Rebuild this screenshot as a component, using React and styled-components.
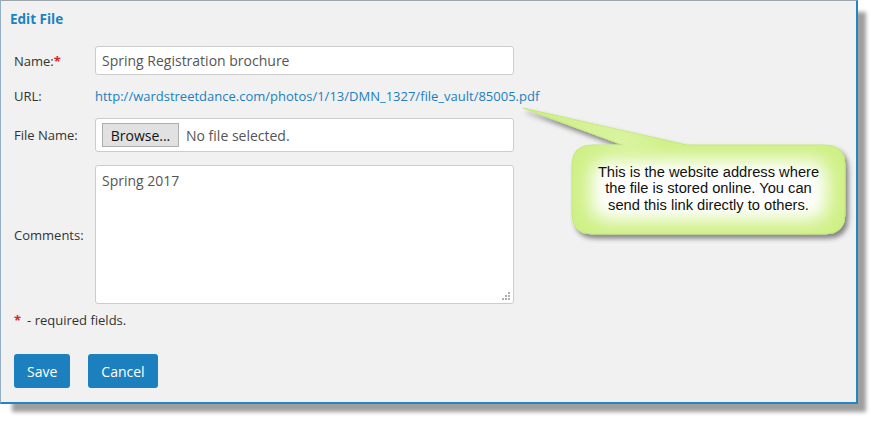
import React from 'react'
import styled, { createGlobalStyle } from 'styled-components'

const Global = createGlobalStyle`
  body {
    margin: 0;
    background: #ffffff;
    font-family: 'Open Sans', 'Liberation Sans', sans-serif;
  }
`

const Page = styled.div`
  width: 883px;
  height: 430px;
  position: relative;
  overflow: hidden;
`

const Panel = styled.div`
  box-sizing: border-box;
  width: 858px;
  height: 404px;
  background: #f1f1f1;
  border-top: 1px solid #9ea6ad;
  border-left: 1px solid #93afc6;
  border-right: 2px solid #2186c6;
  border-bottom: 2px solid #2186c6;
  box-shadow: 10px 10px 4px -2px rgba(0, 0, 0, 0.38);
  padding: 0 0 0 13px;
`

const Title = styled.h2`
  margin: 0 0 0 -4px;
  padding-top: 9px;
  height: 35px;
  box-sizing: border-box;
  font-size: 13.5px;
  line-height: 18px;
  font-weight: 700;
  color: #1b82c2;
`

const Row = styled.div`
  display: flex;
  align-items: center;
  height: ${p => p.h}px;
  margin-top: ${p => p.mt}px;
`

const Label = styled.div`
  width: 81px;
  flex: none;
  font-size: 13px;
  color: #333333;
`

const Star = styled.span`
  color: #e02020;
  font-weight: 700;
`

const TextBox = styled.div`
  box-sizing: border-box;
  width: 419px;
  height: 100%;
  background: #ffffff;
  border: 1px solid #cccccc;
  border-radius: 3px;
  display: flex;
  align-items: center;
  padding-left: 6px;
  font-size: 14px;
  color: #555555;
`

const Link = styled.a`
  font-size: 13px;
  color: #1b7fbf;
  text-decoration: none;
`

const FileBox = styled(TextBox)`
  gap: 7px;
`

const BrowseButton = styled.button`
  height: 24px;
  width: 77px;
  padding: 0;
  background: #e1e1e1;
  border: 1px solid #adadad;
  border-radius: 0;
  font-family: 'Open Sans', sans-serif;
  font-size: 14px;
  color: #111111;
`

const Area = styled(TextBox)`
  position: relative;
  align-items: flex-start;
  padding-top: 5px;
`

const Grip = styled.svg`
  position: absolute;
  right: 2px;
  bottom: 2px;
`

const Note = styled.div`
  margin-top: 7px;
  height: 18px;
  font-size: 13px;
  color: #333333;
  display: flex;
  align-items: center;
  gap: 6px;
`

const Buttons = styled.div`
  display: flex;
  gap: 18px;
  margin-top: 25px;
`

const Button = styled.button`
  height: 34px;
  padding: 0 ${p => p.px}px;
  background: #1b80bd;
  color: #ffffff;
  border: none;
  border-radius: 3px;
  font-family: 'Open Sans', sans-serif;
  font-size: 14px;
`

const Callout = styled.div`
  position: absolute;
  left: 515px;
  top: 100px;
  width: 350px;
  height: 150px;
`

const CalloutText = styled.div`
  position: absolute;
  left: 57px;
  top: 44px;
  width: 273px;
  height: 89px;
  display: flex;
  align-items: center;
  justify-content: center;
  text-align: center;
  font-family: 'Liberation Sans', Arial, sans-serif;
  font-size: 14.7px;
  line-height: 16.5px;
  color: #111111;
`

const bubble =
  'M 77 45 L 108 45 L 8 8 L 172 45 L 310 45 Q 330 45 330 65 L 330 114 Q 330 134 310 134 L 77 134 Q 57 134 57 114 L 57 65 Q 57 45 77 45 Z'

const App = () => {
  return (
    <Page>
      <Global />
      <Panel>
        <Title>Edit File</Title>
        <Row h={29} mt={10}>
          <Label>
            Name:<Star>*</Star>
          </Label>
          <TextBox>Spring Registration brochure</TextBox>
        </Row>
        <Row h={20} mt={11}>
          <Label>URL:</Label>
          <Link href="#">http://wardstreetdance.com/photos/1/13/DMN_1327/file_vault/85005.pdf</Link>
        </Row>
        <Row h={34} mt={12}>
          <Label>File Name:</Label>
          <FileBox>
            <BrowseButton>Browse...</BrowseButton>
            <span>No file selected.</span>
          </FileBox>
        </Row>
        <Row h={139} mt={13}>
          <Label>Comments:</Label>
          <Area>
            Spring 2017
            <Grip width="9" height="9" viewBox="0 0 9 9">
              <g fill="#b0b0b0">
                <rect x="6" y="0" width="2" height="2" />
                <rect x="3" y="3" width="2" height="2" />
                <rect x="6" y="3" width="2" height="2" />
                <rect x="0" y="6" width="2" height="2" />
                <rect x="3" y="6" width="2" height="2" />
                <rect x="6" y="6" width="2" height="2" />
              </g>
            </Grip>
          </Area>
        </Row>
        <Note>
          <Star>*</Star>
          <span>- required fields.</span>
        </Note>
        <Buttons>
          <Button px={13}>Save</Button>
          <Button px={13}>Cancel</Button>
        </Buttons>
      </Panel>
      <Callout>
        <svg width="350" height="150" viewBox="0 0 350 150">
          <defs>
            <filter id="shadow" x="-10%" y="-10%" width="130%" height="140%">
              <feDropShadow dx="3" dy="4" stdDeviation="2.5" floodColor="#000" floodOpacity="0.45" />
            </filter>
            <filter id="soft" x="-20%" y="-40%" width="140%" height="180%">
              <feGaussianBlur stdDeviation="9" />
            </filter>
            <clipPath id="clip">
              <path d={bubble} />
            </clipPath>
          </defs>
          <path d={bubble} fill="#cff087" stroke="#c3e878" strokeWidth="1" filter="url(#shadow)" />
          <g clipPath="url(#clip)">
            <rect x="76" y="60" width="236" height="60" rx="16" fill="#ffffff" filter="url(#soft)" />
            <path d="M 30 14 L 150 45 L 110 45 Z" fill="#e9f9c4" filter="url(#soft)" />
          </g>
        </svg>
        <CalloutText>
          This is the website address where
          <br />
          the file is stored online. You can
          <br />
          send this link directly to others.
        </CalloutText>
      </Callout>
    </Page>
  )
}

export default App
